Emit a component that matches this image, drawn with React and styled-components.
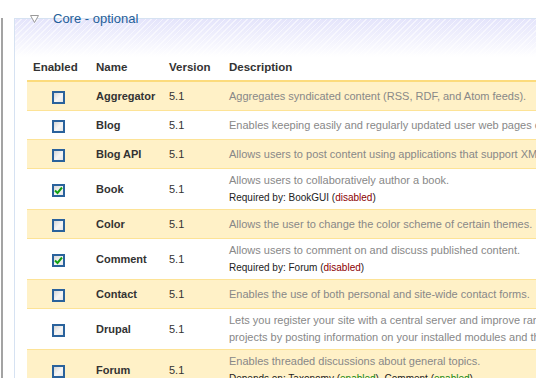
import React from "react"
import styled, { createGlobalStyle } from "styled-components"

const GlobalStyle = createGlobalStyle`
  html, body {
    margin: 0;
    padding: 0;
    background: #fff;
    overflow: hidden;
  }
  body {
    width: 536px;
    height: 378px;
    font-family: "Liberation Sans", Arial, sans-serif;
  }
`

const modules = [
  { name: "Aggregator", desc: ["Aggregates syndicated content (RSS, RDF, and Atom feeds)."] },
  { name: "Blog", desc: ["Enables keeping easily and regularly updated user web pages or blogs."] },
  { name: "Blog API", desc: ["Allows users to post content using applications that support XML-RPC blog APIs."] },
  {
    name: "Book",
    checked: true,
    desc: ["Allows users to collaboratively author a book."],
    note: { label: "Required by:", items: [{ name: "BookGUI", state: "disabled" }] },
  },
  { name: "Color", desc: ["Allows the user to change the color scheme of certain themes."] },
  {
    name: "Comment",
    checked: true,
    desc: ["Allows users to comment on and discuss published content."],
    note: { label: "Required by:", items: [{ name: "Forum", state: "disabled" }] },
  },
  { name: "Contact", desc: ["Enables the use of both personal and site-wide contact forms."] },
  {
    name: "Drupal",
    desc: [
      "Lets you register your site with a central server and improve ranking of Drupal",
      "projects by posting information on your installed modules and themes; also enables users to log in using a Drupal ID.",
    ],
  },
  {
    name: "Forum",
    desc: ["Enables threaded discussions about general topics."],
    note: {
      label: "Depends on:",
      items: [
        { name: "Taxonomy", state: "enabled" },
        { name: "Comment", state: "enabled" },
      ],
    },
  },
]

const Frame = styled.div`
  margin-left: 1px;
  border-left: 2px solid #a3a3a3;
  height: 378px;
`

const Fieldset = styled.div`
  position: relative;
  margin: 18px 0 0 11px;
  padding: 36px 0 0 12px;
  border-top: 1px solid #d6e2f2;
  border-left: 1px solid #d6e2f2;
  background:
    repeating-linear-gradient(135deg, rgba(255, 255, 255, 0.55) 0 1px, transparent 1px 4px) top left / 100% 38px no-repeat,
    linear-gradient(#e4e4fb, #ffffff 38px) top left / 100% 38px no-repeat,
    #fff;
`

const Legend = styled.div`
  position: absolute;
  top: -8px;
  left: 15px;
  display: flex;
  align-items: center;
  gap: 14px;
  font-size: 13px;
  line-height: 15px;
  color: #1f5e99;
`

const Table = styled.table`
  width: 1100px;
  table-layout: fixed;
  border-collapse: collapse;
  font-size: 11px;
  color: #333;
`

const Th = styled.th`
  width: ${(p) => p.$w || "auto"};
  padding: 5px 6px;
  line-height: 15px;
  font-size: 11.5px;
  font-weight: bold;
  text-align: left;
  color: #333;
  border-bottom: 2px solid #fcdb7c;
`

const Row = styled.tr`
  background: ${(p) => (p.$odd ? "#fff1c7" : "#fff")};
  border-bottom: 1px solid #fde396;
`

const Td = styled.td`
  padding: 4px 6px;
  line-height: 20px;
  vertical-align: middle;
  white-space: nowrap;
  text-align: ${(p) => (p.$center ? "center" : "left")};
  font-weight: ${(p) => (p.$bold ? "bold" : "normal")};
  color: #333;
`

const DescCell = styled.td`
  padding: 3px 6px;
  line-height: 17px;
  vertical-align: middle;
  white-space: nowrap;
  color: #888;
`

const Note = styled.div`
  font-size: 10px;
  color: #222;
`

const State = styled.span`
  color: ${(p) => (p.$state === "enabled" ? "#118811" : "#8b0000")};
`

const Box = styled.span`
  display: inline-flex;
  align-items: center;
  justify-content: center;
  box-sizing: border-box;
  width: 13px;
  height: 13px;
  vertical-align: middle;
  border: 2px solid #2a629c;
  background: linear-gradient(135deg, #d6d6d6 0%, #f6f6f6 55%, #e6e6e6 100%);
`

function Checkbox({ checked }) {
  return (
    <Box>
      {checked && (
        <svg width="9" height="9" viewBox="0 0 9 9">
          <path d="M1 4.5 L3.5 7 L8 1.5" fill="none" stroke="#13a013" strokeWidth="2" />
        </svg>
      )}
    </Box>
  )
}

function Dependencies({ note }) {
  return (
    <Note>
      {note.label}{" "}
      {note.items.map((item, idx) => (
        <span key={item.name}>
          {item.name} (<State $state={item.state}>{item.state}</State>)
          {idx < note.items.length - 1 ? ", " : ""}
        </span>
      ))}
    </Note>
  )
}

export default function App() {
  return (
    <Frame>
      <GlobalStyle />
      <Fieldset>
        <Legend>
          <svg width="9" height="8" viewBox="0 0 9 8">
            <polygon points="0.5,0.5 8.5,0.5 4.5,7.5" fill="#fff" stroke="#9a9a9a" />
          </svg>
          Core - optional
        </Legend>
        <Table>
          <thead>
            <tr>
              <Th $w="51px">Enabled</Th>
              <Th $w="61px">Name</Th>
              <Th $w="48px">Version</Th>
              <Th>Description</Th>
            </tr>
          </thead>
          <tbody>
            {modules.map((mod, idx) => (
              <Row key={mod.name} $odd={idx % 2 === 0}>
                <Td $center>
                  <Checkbox checked={mod.checked} />
                </Td>
                <Td $bold>{mod.name}</Td>
                <Td>5.1</Td>
                <DescCell>
                  {mod.desc.map((line) => (
                    <div key={line}>{line}</div>
                  ))}
                  {mod.note && <Dependencies note={mod.note} />}
                </DescCell>
              </Row>
            ))}
          </tbody>
        </Table>
      </Fieldset>
    </Frame>
  )
}
